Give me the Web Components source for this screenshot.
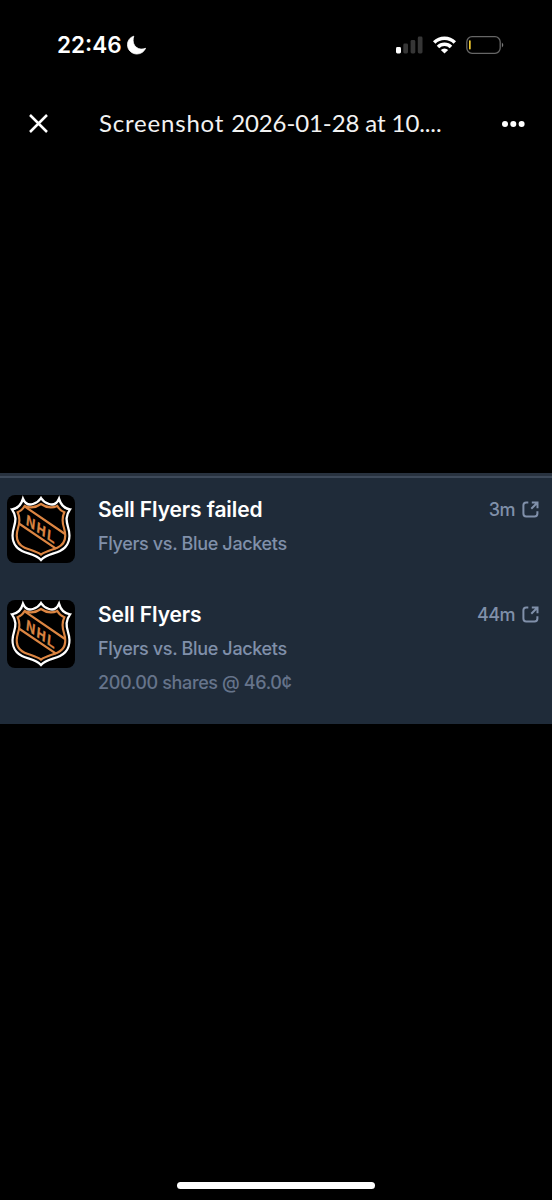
<!DOCTYPE html>
<html lang="en">
<head>
<meta charset="UTF-8">
<meta name="viewport" content="width=device-width, initial-scale=1">
<title>Screenshot viewer</title>
<style>
  html, body {
    margin: 0;
    height: 100%;
    background: #000;
    overflow: hidden;
  }
</style>
</head>
<body>
<photo-viewer></photo-viewer>
<script>
class StatusBar extends HTMLElement {
  constructor() {
    super();
    this.attachShadow({ mode: "open" });
  }

  connectedCallback() {
    this.shadowRoot.innerHTML = /* HTML */ `
      <style>
        :host {
          display: flex;
          align-items: center;
          height: 90px;
          padding: 0 48px 0 57px;
          color: #fff;
          font: 600 22.5px/30px Inter, sans-serif;
        }
        span { width: 65px; white-space: nowrap; }
        svg { display: block; flex: none; }
        .moon { margin-left: 5px; }
        .icons { display: flex; align-items: center; margin-left: auto; }
      </style>
      <span>${this.getAttribute("time")}</span>
      <svg class="moon" width="19" height="20" viewBox="0 0 19 20">
        <path d="M6.800 1.200C3 2.300.5 5.700.5 9.700.5 14.900 4.700 19 9.900 19c3.900 0 7.200-2.300 8.700-5.700-1.200.5-2.400.8-3.700.8-5.100 0-8.800-3.700-8.800-8.800 0-1.500.2-2.800.7-4.100z" fill="#fff" stroke="#fff" stroke-width=".8" stroke-linejoin="round"/>
      </svg>
      <div class="icons">
        <svg width="108" height="20" viewBox="0 0 108 20">
          <rect x="0" y="12" width="5" height="6.500" rx="1.400" fill="#fff"/>
          <g fill="#363636">
            <rect x="7.300" y="8.600" width="4.700" height="9.900" rx="1.400"/>
            <rect x="14.600" y="5" width="4.700" height="13.500" rx="1.400"/>
            <rect x="21.800" y="1.500" width="4.700" height="17" rx="1.400"/>
          </g>
          <g fill="none" stroke="#fff" stroke-width="3.500">
            <path d="M38.200 7.500a14.700 14.700 0 0 1 20.600 0"/>
            <path d="M42 11.900a9.200 9.200 0 0 1 13 0"/>
          </g>
          <path d="M48.500 18.500l-3.700-3.500a5.300 5.300 0 0 1 7.400 0z" fill="#fff"/>
          <rect x="70.800" y="1.700" width="33.400" height="16.600" rx="5.200" fill="none" stroke="#666" stroke-width="1.300"/>
          <path d="M105.900 7.600q2.800 2.400 0 4.800z" fill="#777"/>
          <rect x="73" y="5.200" width="1.700" height="9.300" rx=".7" fill="#efc82e"/>
        </svg>
      </div>
    `;
  }
}

class TitleBar extends HTMLElement {
  constructor() {
    super();
    this.attachShadow({ mode: "open" });
  }

  connectedCallback() {
    this.shadowRoot.innerHTML = /* HTML */ `
      <style>
        :host {
          display: flex;
          align-items: center;
          height: 66px;
          padding: 0 27px 2px 28px;
          box-sizing: content-box;
          color: #f2f2f2;
          font: 400 24px/32px Lato, sans-serif;
        }
        svg { display: block; flex: none; }
        .title { margin-left: 50px; white-space: nowrap; letter-spacing: 0.8px; }
        ::slotted(span) { letter-spacing: -0.1px; }
        .more { margin: 2px 0 0 auto; }
      </style>
      <svg width="21" height="21" viewBox="0 0 21 21">
        <path d="M2 2l17 17M19 2L2 19" stroke="#fff" stroke-width="2.500"/>
      </svg>
      <div class="title"><slot></slot></div>
      <svg class="more" width="24" height="8" viewBox="0 0 24 8" fill="#fff">
        <circle cx="4" cy="4" r="3"/><circle cx="12.300" cy="4" r="3"/><circle cx="20.600" cy="4" r="3"/>
      </svg>
    `;
  }
}

class LeagueLogo extends HTMLElement {
  constructor() {
    super();
    this.attachShadow({ mode: "open" });
  }

  connectedCallback() {
    this.shadowRoot.innerHTML = /* HTML */ `
      <style>
        :host {
          display: block;
          width: 68px;
          height: 68px;
          border-radius: 8px;
          background: #000;
          overflow: hidden;
        }
        svg { display: block; }
        text { font: 700 44px "Liberation Sans", sans-serif; }
      </style>
      <svg width="68" height="68" viewBox="0 0 204 204">
        <path d="M48 11Q58 34 78 27Q94 22 102 9Q110 22 126 27Q146 34 156 11Q164 40 189 43C176 62 177 76 183 96C193 128 185 155 159 168C139 178 118 178 102 195C86 178 65 178 45 168C19 155 11 128 21 96C27 76 28 62 15 43Q40 40 48 11Z" fill="none" stroke="#fff" stroke-width="7"/>
        <g fill="none" stroke="#dc8542" stroke-width="6.500">
          <path d="M53 33Q78 44 102 27Q126 44 151 33Q158 46 172 52C164 69 165 81 171 99C179 126 174 148 151 158C133 166 116 168 102 179C88 168 71 166 53 158C30 148 25 126 33 99C39 81 40 69 32 52Q46 46 53 33Z"/>
          <path d="M54 35L174 117M38 87L147 161"/>
        </g>
        <text transform="matrix(.84 .58 -.1 1 56 88)" textLength="102" lengthAdjust="spacing" fill="#dc8542" stroke="#dc8542">NHL</text>
      </svg>
    `;
  }
}

class ActivityRow extends HTMLElement {
  constructor() {
    super();
    this.attachShadow({ mode: "open" });
  }

  connectedCallback() {
    this.shadowRoot.innerHTML = /* HTML */ `
      <style>
        :host {
          display: flex;
          align-items: flex-start;
          font: 500 18px/24px Inter, sans-serif;
          color: #8090aa;
        }
        .body { flex: 1; margin-left: 23px; padding-top: 1px; white-space: nowrap; }
        .name {
          color: #fff;
          font-size: 21px;
          font-weight: 600;
          line-height: 28px;
          letter-spacing: -0.1px;
        }
        .match { display: block; margin-top: 8px; letter-spacing: -0.35px; }
        ::slotted([slot="detail"]) {
          display: block;
          margin-top: 10px;
          color: #66748b;
          letter-spacing: -0.37px;
        }
        .time { display: flex; align-items: center; gap: 7px; height: 28px; }
        .time span { padding-top: 1px; letter-spacing: -0.5px; }
        svg { display: block; }
      </style>
      <league-logo></league-logo>
      <div class="body">
        <div class="name">${this.getAttribute("name")}</div>
        <span class="match"><slot></slot></span>
        <slot name="detail"></slot>
      </div>
      <div class="time">
        <span>${this.getAttribute("time")}</span>
        <svg width="17" height="17" viewBox="0 0 17 17" fill="none" stroke="#8090aa" stroke-width="2">
          <path d="M6.300 1.500H4.200Q1.400 1.500 1.400 4.300v8.200q0 2.900 2.800 2.900h8.300q2.900 0 2.900-2.900v-2.200M9.800 1.500h5.700v5.700M15.500 1.500L9.300 7.700"/>
        </svg>
      </div>
    `;
  }
}

class ActivityPanel extends HTMLElement {
  constructor() {
    super();
    this.attachShadow({ mode: "open" });
  }

  connectedCallback() {
    this.shadowRoot.innerHTML = /* HTML */ `
      <style>
        :host {
          display: flex;
          flex-direction: column;
          gap: 37px;
          box-sizing: border-box;
          height: 251px;
          padding: 22px 13px 0 7px;
          background: linear-gradient(#28323f 0 3px, #3d4959 3px 5px, #1f2b39 5px);
        }
      </style>
      <slot></slot>
    `;
  }
}

class PhotoViewer extends HTMLElement {
  constructor() {
    super();
    this.attachShadow({ mode: "open" });
  }

  connectedCallback() {
    this.shadowRoot.innerHTML = /* HTML */ `
      <style>
        :host {
          display: flex;
          flex-direction: column;
          height: 1200px;
          background: #000;
        }
        activity-panel { margin-top: 315px; }
        .home {
          width: 198px;
          height: 7px;
          margin: auto auto 11px 177px;
          border-radius: 4px;
          background: #fff;
        }
      </style>
      <status-bar time="22:46"></status-bar>
      <title-bar>Screenshot <span>2026-01-28 at 10....</span></title-bar>
      <activity-panel>
        <activity-row name="Sell Flyers failed" time="3m">Flyers vs. Blue Jackets</activity-row>
        <activity-row name="Sell Flyers" time="44m">Flyers vs. Blue Jackets<span slot="detail">200.00 shares @ 46.0¢</span></activity-row>
      </activity-panel>
      <div class="home"></div>
    `;
  }
}

customElements.define("status-bar", StatusBar);
customElements.define("title-bar", TitleBar);
customElements.define("league-logo", LeagueLogo);
customElements.define("activity-row", ActivityRow);
customElements.define("activity-panel", ActivityPanel);
customElements.define("photo-viewer", PhotoViewer);
</script>
</body>
</html>
